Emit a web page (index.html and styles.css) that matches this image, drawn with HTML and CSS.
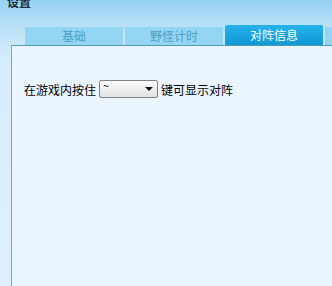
FILE: index.html
```html
<!DOCTYPE html>
<html lang="zh-CN">
<head>
<meta charset="UTF-8">
<title>设置</title>
<link rel="stylesheet" href="styles.css">
</head>
<body>

<div class="title">设置</div>

<div class="tabs">
  <div class="tab">基础</div>
  <div class="tab">野怪计时</div>
  <div class="tab active">对阵信息</div>
  <div class="tab"></div>
</div>

<div class="panel">
  <div class="row">
    <span>在游戏内按住</span>
    <span class="combo">
      <span class="combo-value">~</span>
      <span class="combo-arrow"></span>
    </span>
    <span>键可显示对阵</span>
  </div>
</div>

</body>
</html>
```

FILE: styles.css
```css
html, body {
  margin: 0;
  height: 100%;
  overflow: hidden;
}
body {
  font-family: "Noto Sans CJK SC", "DejaVu Sans", sans-serif;
  font-size: 12px;
  color: #000;
  background: linear-gradient(to bottom, #95d2f3 0px, #bfe2f8 30px, #d6ecfb 60px, #e0f0fd 286px);
  display: flex;
  flex-direction: column;
}
.title {
  font-weight: bold;
  font-size: 12px;
  line-height: 14px;
  height: 8px;
  margin-top: -5px;
  padding-left: 7px;
  color: #1d2a33;
}
.tabs {
  display: flex;
  align-items: flex-end;
  gap: 2px;
  margin-top: 22px;
  padding-left: 25px;
  height: 20px;
  overflow: hidden;
}
.tab {
  flex: 0 0 98px;
  height: 18px;
  line-height: 18px;
  text-align: center;
  background: #93d5f3;
  color: #4d9dc4;
}
.tab.active {
  height: 20px;
  line-height: 20px;
  background: linear-gradient(to bottom, #26b2ea, #0f98d5);
  color: #fff;
  border-radius: 2px 2px 0 0;
}
.panel {
  flex: 1;
  margin-left: 11px;
  border-top: 1px solid #4f9db4;
  border-left: 1px solid #6cb2c4;
  background: #eaf5ff;
  padding: 34px 0 0 12px;
}
.row {
  display: flex;
  align-items: center;
  gap: 3px;
}
.combo {
  position: relative;
  width: 57px;
  height: 16px;
  border: 1px solid #7c8286;
  border-radius: 2px;
  background: linear-gradient(to bottom, #fdfdfd, #e2e2e2);
}
.combo-value {
  position: absolute;
  left: 3px;
  top: -3px;
  font-size: 11px;
  line-height: 14px;
}
.combo-arrow {
  position: absolute;
  right: 4px;
  top: 6px;
  width: 0;
  height: 0;
  border-left: 4px solid transparent;
  border-right: 4px solid transparent;
  border-top: 4px solid #111;
}
```
